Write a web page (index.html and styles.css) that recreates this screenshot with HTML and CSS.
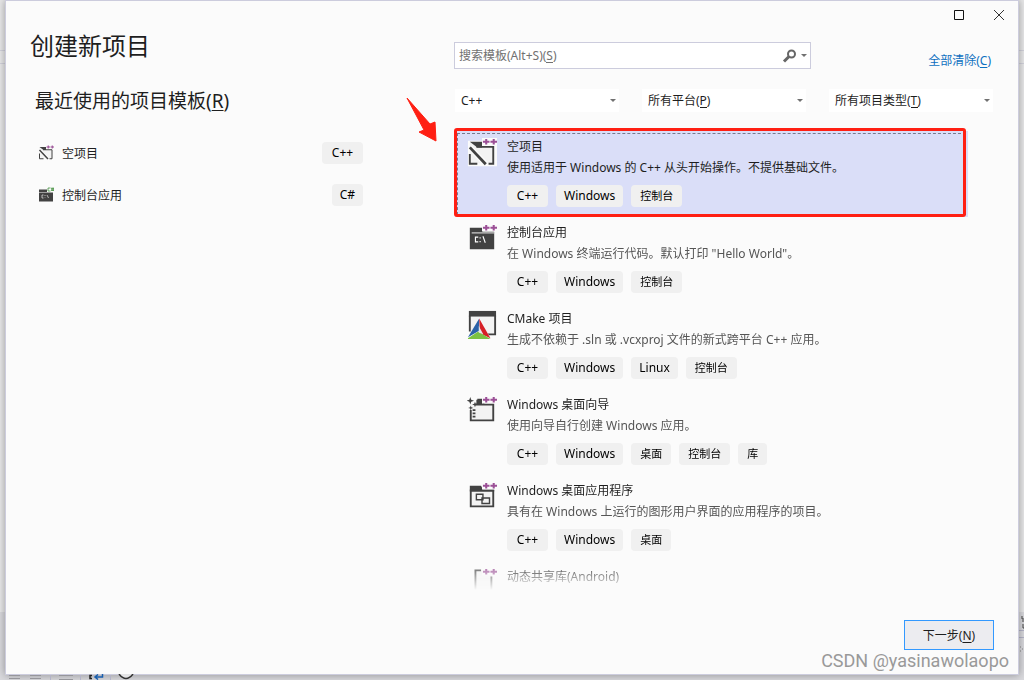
FILE: index.html
```html
<!DOCTYPE html>
<html lang="zh-CN">
<head>
<meta charset="utf-8">
<title>创建新项目</title>
<link rel="stylesheet" href="styles.css">
</head>
<body>
<svg class="backdrop-tools" width="160" height="6" viewBox="0 0 160 6" aria-hidden="true">
  <path d="M9 1.500h11M9 4.500h11M30 1.500h11M30 4.500h11M59 1.500h14M59 5.500h14" stroke="#96969b"/>
  <path d="M50.500 1v5M80.500 1v5M110.500 1v5" stroke="#b4b4c8"/>
  <path d="M92 1.500h-2v3h2" fill="none" stroke="#222" stroke-width="1.500"/>
  <path d="M102.500 0v3H95M98 .5L95 3l3 2.500" fill="none" stroke="#1a5fae" stroke-width="1.500"/>
  <path d="M119 0q7 9 14 0" fill="#e4e4e6" stroke="#333" stroke-width="1.500"/>
</svg>
<svg class="backdrop-side" width="5" height="50" viewBox="0 0 5 50" aria-hidden="true">
  <path d="M3 6v3h2M3 11h2M4 14v4h1" fill="none" stroke="#444"/>
  <path d="M0 20.500h5M0 27.500h5" stroke="#b4b4c8"/>
  <path d="M1 37h1M3 39h1M1 41h1" stroke="#888"/>
</svg>

<main class="dialog">
  <div class="window-buttons">
    <button type="button" aria-label="最大化"><svg width="12" height="12" viewBox="0 0 12 12"><path d="M1.500 1.500h9v9h-9z" fill="none" stroke="#111"/></svg></button>
    <button type="button" aria-label="关闭"><svg width="12" height="12" viewBox="0 0 12 12"><path d="M1 1l10 10M11 1L1 11" stroke="#333"/></svg></button>
  </div>

  <section class="recent">
    <h1>创建新项目</h1>
    <h2>最近使用的项目模板(<u>R</u>)</h2>
    <ul class="recent-list">
      <li>
        <svg width="16" height="16" viewBox="0 0 32 32"><use href="#icon-empty"/></svg>
        <span class="recent-name">空项目</span><span class="tag latin cpp">C++</span>
      </li>
      <li>
        <svg width="16" height="16" viewBox="0 0 32 32"><path d="M2 5h16v5h12v19H2z" fill="#424242"/><path d="M2 11h28" stroke="#fbfbfb"/><path d="M11 16H8v6h3M14 16v2m0 3v1M18 16l3 6" fill="none" stroke="#ddd" stroke-width="1.500"/><path d="M19 0h13v9H19z" fill="#fbfbfb"/><path d="M25 2h-5v6h5M26 3.500h6M26 6.500h6M28 1v7M30.500 1v7" fill="none" stroke="#388a34" stroke-width="1.500"/></svg>
        <span class="recent-name">控制台应用</span><span class="tag latin">C#</span>
      </li>
    </ul>
  </section>

  <section class="templates">
    <div class="search-row">
      <div class="search">
        <input type="text" aria-label="搜索模板" placeholder="搜索模板(Alt+S)(S)">
        <svg class="search-icon" width="28" height="16" viewBox="0 0 28 16" aria-hidden="true"><circle cx="9.500" cy="6" r="3.500" fill="none" stroke="#666" stroke-width="2"/><path d="M7 8.500L2 13.500" stroke="#666" stroke-width="3"/><path d="M19 6h6l-3 3z" fill="#717171"/></svg>
      </div>
      <a class="clear" href="#">全部清除(<u>C</u>)</a>
    </div>
    <div class="filters">
      <div class="filter"><select aria-label="语言"><option>C++</option></select><svg width="6" height="3" viewBox="0 0 6 3"><path d="M0 0h6L3 3z" fill="#717171"/></svg></div>
      <div class="filter"><select class="key-p" aria-label="平台"><option>所有平台(P)</option></select><svg width="6" height="3" viewBox="0 0 6 3"><path d="M0 0h6L3 3z" fill="#717171"/></svg></div>
      <div class="filter"><select class="key-t" aria-label="项目类型"><option>所有项目类型(T)</option></select><svg width="6" height="3" viewBox="0 0 6 3"><path d="M0 0h6L3 3z" fill="#717171"/></svg></div>
    </div>

    <div class="list-area">
      <ul class="template-list">
        <li class="template selected">
          <svg class="icon" viewBox="0 0 32 32">
            <path d="M1 3h15V0h16v30H1z" fill="#fbfbfb"/>
            <g id="icon-empty"><path d="M3 5h13v4h13v18H3z" fill="#f3f3f3"/><path d="M3 4h13v6H11z" fill="#424242"/><path d="M10 9.500h18v18h-5M3 17v10.500h8" fill="none" stroke="#424242" stroke-width="2"/><path d="M3 10l17 18" stroke="#fbfbfb" stroke-width="6"/><path d="M3 10l17 18" stroke="#424242" stroke-width="3"/><path d="M16 0h16v8H16z" fill="#fbfbfb"/><path d="M17 4h7M20.500 1v6M25 4h7M28.500 1v6" stroke="#9b4f96" stroke-width="2.200"/></g>
          </svg>
          <div class="text">
            <h3>空项目</h3>
            <p>使用适用于 Windows 的 C++ 从头开始操作。不提供基础文件。</p>
            <div class="tags"><span class="tag latin cpp">C++</span><span class="tag latin">Windows</span><span class="tag">控制台</span></div>
          </div>
        </li>
        <li class="template">
          <svg class="icon" viewBox="0 0 32 32"><path d="M3 4h14v4h12v19H3z" fill="#424242"/><path d="M5 9.500h24" stroke="#fbfbfb"/><path d="M12 14H9v5h3M14 14v1.500M14 18v1.500M17 13l2.500 7" fill="none" stroke="#fff" stroke-width="1.200"/><path d="M16 0h16v8H16z" fill="#fbfbfb"/><path id="plus" d="M17 4h7M20.500 1v6M25 4h7M28.500 1v6" stroke="#9b4f96" stroke-width="2.200"/></svg>
          <div class="text">
            <h3>控制台应用</h3>
            <p>在 Windows 终端运行代码。默认打印 "Hello World"。</p>
            <div class="tags"><span class="tag latin cpp">C++</span><span class="tag latin">Windows</span><span class="tag">控制台</span></div>
          </div>
        </li>
        <li class="template">
          <svg class="icon" viewBox="0 0 32 32"><path d="M3 2h27v24H3z" fill="#f3f3f3"/><path d="M2 1h29v6H2z" fill="#424242"/><path d="M3 6v17M30 6v20h-8" fill="none" stroke="#424242" stroke-width="2"/><path d="M13 8L0 32h26z" fill="#fbfbfb"/><path d="M13 9L1 29l12-7z" fill="#2b62a8"/><path d="M13 9l12 21-11-5z" fill="#d61f26"/><path d="M1 30l11-7 13 8H1z" fill="#7cc142"/><path d="M12.500 17v7l5 2z" fill="#e4e8ed"/></svg>
          <div class="text">
            <h3>CMake 项目</h3>
            <p>生成不依赖于 .sln 或 .vcxproj 文件的新式跨平台 C++ 应用。</p>
            <div class="tags"><span class="tag latin cpp">C++</span><span class="tag latin">Windows</span><span class="tag latin">Linux</span><span class="tag">控制台</span></div>
          </div>
        </li>
        <li class="template">
          <svg class="icon" viewBox="0 0 32 32"><path d="M4 9h24v17H4z" fill="#f3f3f3"/><path d="M11 4h5l2 5h10v17H4V15M9 9h10" fill="none" stroke="#424242" stroke-width="2"/><path d="M10 4h6v5h-6z" fill="#424242"/><path d="M7.500 14v10" stroke="#424242" stroke-width="3" stroke-dasharray="2 1.500"/><path d="M3.500 1l1 3 3 1-3 1-1 3-1-3-3-1 3-1zM8.500 6l.8 2.200 2.200.8-2.200.8-.8 2.200-.8-2.200L5.500 9l2.200-.8zM4 10l.7 2 2 .7-2 .7-.7 2-.7-2-2-.7 2-.7z" fill="#424242"/><path d="M16 0h16v8H16z" fill="#fbfbfb"/><use href="#plus"/></svg>
          <div class="text">
            <h3>Windows 桌面向导</h3>
            <p>使用向导自行创建 Windows 应用。</p>
            <div class="tags"><span class="tag latin cpp">C++</span><span class="tag latin">Windows</span><span class="tag">桌面</span><span class="tag">控制台</span><span class="tag">库</span></div>
          </div>
        </li>
        <li class="template">
          <svg class="icon" viewBox="0 0 32 32"><path d="M4 9h24v17H4z" fill="#f3f3f3" stroke="#424242" stroke-width="2"/><path d="M3 4h12l2 4h12v2H3z" fill="#424242"/><path d="M10 13h7v6h-7zM16 17h8v6h-8z" fill="#f3f3f3" stroke="#424242" stroke-width="1.500"/><path d="M16 0h16v8H16z" fill="#fbfbfb"/><use href="#plus"/></svg>
          <div class="text">
            <h3>Windows 桌面应用程序</h3>
            <p>具有在 Windows 上运行的图形用户界面的应用程序的项目。</p>
            <div class="tags"><span class="tag latin cpp">C++</span><span class="tag latin">Windows</span><span class="tag">桌面</span></div>
          </div>
        </li>
        <li class="template">
          <svg class="icon" viewBox="0 0 32 32"><path d="M9 3h17v27H9z" fill="#f3f3f3"/><path d="M15 2.500H9V32M26 9v23" fill="none" stroke="#424242" stroke-width="2"/><path d="M16 0h16v8H16z" fill="#fbfbfb"/><use href="#plus"/></svg>
          <div class="text">
            <h3>动态共享库(Android)</h3>
          </div>
        </li>
      </ul>
      <div class="callout-box"></div>
      <svg class="callout-arrow" width="32" height="46" viewBox="0 0 32 46" aria-hidden="true"><path d="M1 1l23 26 5-2 1 19-17-9 5-2z" fill="#ff1f13" stroke="#ff1f13" stroke-linejoin="round"/></svg>
    </div>

    <div class="footer"><button type="button" class="next">下一步(<u>N</u>)</button></div>
  </section>
</main>
<div class="watermark">CSDN @yasinawolaopo</div>
</body>
</html>
```
FILE: styles.css
```css
* {
  box-sizing: border-box;
}

body {
  position: relative;
  display: flex;
  height: 100vh;
  margin: 0;
  padding: 0 5px 5px;
  overflow: hidden;
  font-family: "Noto Sans", "Noto Sans CJK SC", sans-serif;
  font-size: 12px;
  color: #1e1e1e;
  background:
    linear-gradient(#d2d2dc, #d2d2dc) 0 50px / 100% 1px no-repeat,
    linear-gradient(#d2d2dc, #d2d2dc) 0 63px / 100% 1px no-repeat,
    linear-gradient(#e8e8e9 0 90%, #d9d9dd 90%);
}

h1, h2, h3, p, ul {
  margin: 0;
  padding: 0;
  font-weight: 400;
  list-style: none;
}

u {
  text-underline-offset: 2px;
}

button, input, select {
  font: inherit;
  color: inherit;
}

.backdrop-tools {
  position: absolute;
  left: 0;
  bottom: 0;
  z-index: 1;
}

.backdrop-side {
  position: absolute;
  right: 0;
  bottom: 20px;
}

.dialog {
  position: relative;
  flex: 1;
  display: grid;
  grid-template-columns: 424px minmax(0, 1fr);
  min-height: 0;
  padding: 0 24px 24px;
  background: #fbfbfb;
  border: 1px solid #ccccdd;
  box-shadow: 0 0 8px rgba(0, 0, 0, 0.35);
}

.window-buttons {
  position: absolute;
  top: 4px;
  right: 8px;
  display: flex;
  gap: 18px;
}

.window-buttons button {
  display: grid;
  place-items: center;
  width: 22px;
  height: 20px;
  padding: 0;
  background: none;
  border: 0;
}

.recent {
  padding-top: 27px;
}

h1 {
  font-size: 24px;
  line-height: 36px;
}

h2 {
  margin: 22px 0 0 5px;
  font-size: 19px;
  line-height: 30px;
}

.recent-list {
  width: 325px;
  margin: 16px 0 0 8px;
}

.recent-list li {
  display: flex;
  align-items: center;
  height: 42px;
}

.recent-name {
  flex: 1;
  margin-left: 8px;
}

.templates {
  display: flex;
  flex-direction: column;
  min-height: 0;
  padding-top: 41px;
}

.search-row {
  display: flex;
  justify-content: space-between;
  height: 27px;
}

.search {
  position: relative;
  width: 357px;
}

.search input {
  display: block;
  width: 100%;
  height: 27px;
  padding: 0 40px 0 4px;
  background: linear-gradient(#717171, #717171) 91px 19px / 7px 1px no-repeat #fff;
  border: 1px solid #ccccdd;
}

.search input::placeholder {
  color: #717171;
}

.search-icon {
  position: absolute;
  top: 6px;
  right: 1px;
}

.clear {
  margin: 9px 3px 0 0;
  line-height: 20px;
  color: #0e70c0;
  text-decoration: none;
}

.filters {
  display: grid;
  grid-template-columns: repeat(3, 1fr);
  gap: 23px;
  margin: 20px 1px 0;
}

.filter {
  position: relative;
}

.filter select {
  display: block;
  width: 100%;
  height: 23px;
  padding: 0 6px;
  appearance: none;
  background: #fff;
  border: 0;
}

.filter .key-p {
  background: linear-gradient(#1e1e1e, #1e1e1e) 58px 18px / 7px 1px no-repeat #fff;
}

.filter .key-t {
  background: linear-gradient(#1e1e1e, #1e1e1e) 82px 18px / 7px 1px no-repeat #fff;
}

.filter svg {
  position: absolute;
  top: 10px;
  right: 3px;
}

.list-area {
  position: relative;
  flex: 1;
  min-height: 0;
  margin-top: 19px;
}

.template-list {
  height: 100%;
  margin-right: 26px;
  padding-left: 1px;
  overflow: hidden;
  -webkit-mask-image: linear-gradient(to top, transparent, #000 30px);
  mask-image: linear-gradient(to top, transparent, #000 30px);
}

.template {
  display: flex;
  gap: 10px;
  height: 86px;
  padding: 7px 12px 10px;
}

.selected {
  background: #dadef8;
  outline: 1px dashed #777b90;
  outline-offset: -3px;
}

.icon {
  flex: none;
  width: 30px;
  height: 30px;
}

h3, .template p {
  font-size: 12px;
  white-space: nowrap;
}

h3 {
  line-height: 18px;
}

.template p {
  margin-top: 1px;
  line-height: 22px;
  color: #555;
}

.selected p {
  color: #1e1e1e;
}

.tags {
  display: flex;
  gap: 8px;
  margin-top: 6px;
}

.tag {
  height: 22px;
  padding: 0 9px;
  font-size: 11px;
  line-height: 22px;
  text-align: center;
  color: #000;
  background: #f0f0f0;
  border-radius: 4px;
}

.latin {
  padding: 0 8px;
  font-size: 12px;
}

.cpp {
  min-width: 41px;
}

.callout-box {
  position: absolute;
  top: -3px;
  left: 0;
  right: 28px;
  height: 89px;
  border: 3px solid #ff1f13;
  border-radius: 3px;
}

.callout-arrow {
  position: absolute;
  top: -34px;
  left: -48px;
}

.footer {
  display: flex;
  justify-content: flex-end;
  margin-top: 30px;
}

.next {
  width: 90px;
  height: 30px;
  padding: 0;
  background: #ececf0;
  border: 1px solid #3399ff;
}

.watermark {
  position: absolute;
  right: 15px;
  bottom: 8px;
  font-family: Roboto, sans-serif;
  font-size: 18px;
  line-height: 22px;
  color: #999;
}
```
